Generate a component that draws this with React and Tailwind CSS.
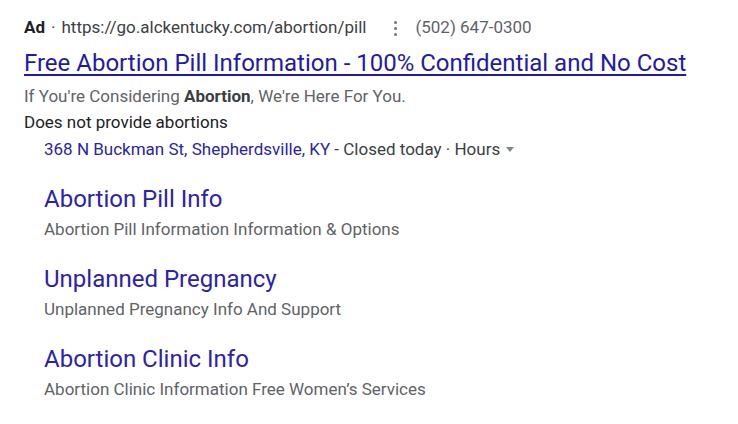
export default function App() {
  const sitelinks = [
    { title: 'Abortion Pill Info', desc: 'Abortion Pill Information Information & Options' },
    { title: 'Unplanned Pregnancy', desc: 'Unplanned Pregnancy Info And Support' },
    { title: 'Abortion Clinic Info', desc: 'Abortion Clinic Information Free Women\u2019s Services' },
  ];

  return (
    <div className="w-[738px] h-[424px] bg-white font-['Roboto',sans-serif] overflow-hidden">
      <div className="pl-[24px] pt-[16px]">
        {/* Ad header */}
        <div className="flex items-center h-[24px] text-[17px] text-[#202124]">
          <span className="font-bold">Ad</span>
          <span className="mx-[6px] text-[#3c4043]">·</span>
          <span className="text-[#3c4043]">https://go.alckentucky.com/abortion/pill</span>
          <span className="ml-[28px] mr-[18px] flex flex-col gap-[3px]">
            <span className="w-[3px] h-[3px] rounded-full bg-[#70757a]"></span>
            <span className="w-[3px] h-[3px] rounded-full bg-[#70757a]"></span>
            <span className="w-[3px] h-[3px] rounded-full bg-[#70757a]"></span>
          </span>
          <span className="text-[#5f6368]">(502) 647-0300</span>
        </div>

        {/* Title */}
        <div className="mt-[8px] text-[24px] leading-[30px] text-[#1f1aa8] underline decoration-[1.5px] underline-offset-[3px]">
          Free Abortion Pill Information - 100% Confidential and No Cost
        </div>

        <div className="mt-[6px] text-[17px] leading-[24px] text-[#5f6368]">
          If You're Considering <span className="font-bold text-[#3c4043]">Abortion</span>, We're Here For You.
        </div>
        <div className="mt-[2px] text-[17px] leading-[24px] text-[#202124]">Does not provide abortions</div>

        <div className="mt-[3px] pl-[20px] flex items-center text-[17px] leading-[24px] text-[#3c4043]">
          <span className="text-[#2b23ad]">368 N Buckman St, Shepherdsville, KY</span>
          <span>&nbsp;- Closed today · Hours</span>
          <span className="ml-[6px] w-0 h-0 border-l-[4px] border-r-[4px] border-t-[5px] border-l-transparent border-r-transparent border-t-[#80868b]"></span>
        </div>

        {/* Sitelinks */}
        <div className="pl-[20px] mt-[23px] flex flex-col gap-[20px]">
          {sitelinks.map((s) => (
            <div key={s.title}>
              <div className="text-[24px] leading-[30px] text-[#2b23ad]">{s.title}</div>
              <div className="text-[17px] leading-[30px] text-[#5f6368]">{s.desc}</div>
            </div>
          ))}
        </div>
      </div>
    </div>
  );
}
